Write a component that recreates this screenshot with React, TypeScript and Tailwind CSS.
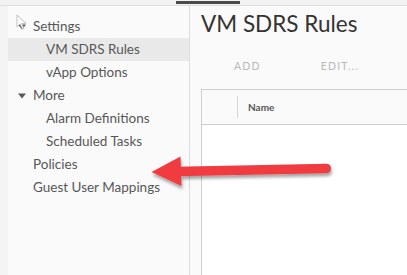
import React from 'react';

// ============================================================================
// Sidebar data
// ============================================================================

interface NavItem {
  label: string;
  level: 0 | 1;
  caret?: boolean;
  active?: boolean;
}

const navItems: NavItem[] = [
  { label: 'Settings', level: 0, caret: true },
  { label: 'VM SDRS Rules', level: 1, active: true },
  { label: 'vApp Options', level: 1 },
  { label: 'More', level: 0, caret: true },
  { label: 'Alarm Definitions', level: 1 },
  { label: 'Scheduled Tasks', level: 1 },
  { label: 'Policies', level: 0 },
  { label: 'Guest User Mappings', level: 0 },
];

function Caret() {
  return (
    <svg width="8" height="6" viewBox="0 0 8 6" className="absolute left-[10px] top-[9px]">
      <path d="M0 0.5 L8 0.5 L4 5.5 Z" fill="#5a5a5a" />
    </svg>
  );
}

function Sidebar() {
  return (
    <nav className="w-[182px] shrink-0 bg-[#fafafa] border-r border-[#dcdcdc] pt-[9px] pb-[80px]">
      {navItems.map((item, i) => (
        <div
          key={i}
          className={`relative h-[23px] flex items-center text-[13.5px] text-[#575757] ${
            item.level === 1 ? 'pl-[38px]' : 'pl-[25px]'
          } ${item.active ? 'bg-[#e9e9e9]' : ''}`}
        >
          {item.caret && <Caret />}
          {item.label}
        </div>
      ))}
    </nav>
  );
}

// ============================================================================
// Overlay drawings (mouse pointer + red annotation arrow)
// ============================================================================

function MousePointer() {
  return (
    <svg width="12" height="16" viewBox="0 0 12 16" className="absolute left-[16px] top-[14px]">
      <path d="M1 1 L1 13 L4 10 L6.5 15 L8 14.3 L5.6 9.4 L10 9.4 Z" fill="#ffffff" stroke="#b0b0b0" strokeWidth="0.8" />
    </svg>
  );
}

function RedArrow() {
  return (
    <svg width="407" height="275" viewBox="0 0 407 275" className="absolute left-0 top-0 pointer-events-none">
      <defs>
        <filter id="arrowShadow" x="-10%" y="-50%" width="120%" height="200%">
          <feDropShadow dx="1" dy="3" stdDeviation="1.6" floodColor="#000" floodOpacity="0.35" />
        </filter>
      </defs>
      <g filter="url(#arrowShadow)" fill="#f03a40">
        <path d="M176 166.8 L326 163.8 Q331 163.7 331 168.5 Q331 173 326 173.2 L176 176.2 Z" />
        <path d="M151.5 172 L180.5 156.5 L181.5 186 Z" />
      </g>
    </svg>
  );
}

// ============================================================================
// Main pane
// ============================================================================

function MainPane() {
  return (
    <main className="flex-1 bg-[#fafafa] pl-[11px] min-w-0">
      <h1 className="text-[22.5px] leading-none text-[#333333] mt-[7px]">VM SDRS Rules</h1>
      <div className="flex items-center gap-[60px] pl-[33px] mt-[23px] text-[10.5px] tracking-[1.2px] text-[#b9b9b9]">
        <span>ADD</span>
        <span>EDIT...</span>
      </div>
      <div className="mt-[15px] -mr-[20px] border border-[#cfcfcf] bg-white h-[200px]">
        <div className="flex items-center h-[35px] bg-[#fafafa] border-b border-[#cfcfcf]">
          <div className="w-[36px] h-[22px] border-r border-[#d6d6d6]" />
          <span className="pl-[10px] text-[10px] font-bold text-[#565656]">Name</span>
        </div>
      </div>
    </main>
  );
}

export default function App() {
  return (
    <div className="relative w-[407px] h-[275px] overflow-hidden bg-[#f4f4f4] font-['Lato',sans-serif]">
      <div className="relative h-[6px] bg-[#f2f2f2] border-b border-[#dedede]">
        <div className="absolute left-[176px] top-[1px] w-[64px] h-[3px] bg-[#4a4a4a]" />
      </div>
      <div className="flex pl-[8px]">
        <Sidebar />
        <MainPane />
      </div>
      <MousePointer />
      <RedArrow />
    </div>
  );
}
